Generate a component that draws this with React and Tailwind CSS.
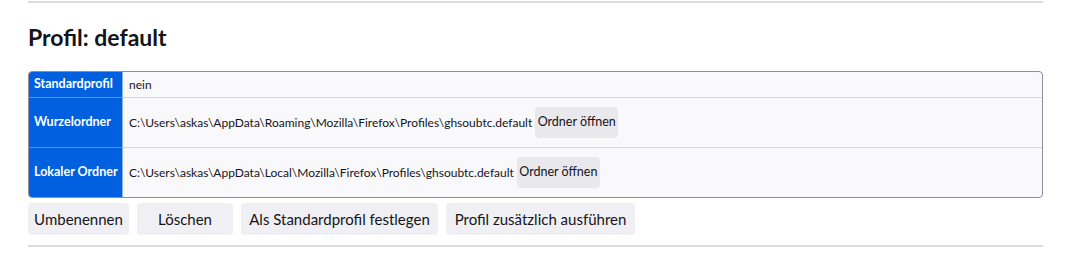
const rows = [
  { label: "Standardprofil", value: "nein" },
  {
    label: "Wurzelordner",
    value: "C:\\Users\\askas\\AppData\\Roaming\\Mozilla\\Firefox\\Profiles\\ghsoubtc.default",
    open: true,
  },
  {
    label: "Lokaler Ordner",
    value: "C:\\Users\\askas\\AppData\\Local\\Mozilla\\Firefox\\Profiles\\ghsoubtc.default",
    open: true,
  },
];

const actions = [
  { text: "Umbenennen", width: "w-[101px]" },
  { text: "Löschen", width: "w-[96px]" },
  { text: "Als Standardprofil festlegen", width: "w-[197px]" },
  { text: "Profil zusätzlich ausführen", width: "w-[189px]" },
];

function App() {
  return (
    <div
      className="w-[1086px] h-[269px] bg-white text-[#15141a] pl-[28px] pt-[1px]"
      style={{ fontFamily: 'Lato, "Noto Sans", sans-serif' }}
    >
      <div className="w-[1015px]">
        <div className="h-[2px] bg-[#dcdce0]" />

        <h2 className="mt-[22px] h-[24px] text-[23px] leading-[24px] font-bold">
          Profil: default
        </h2>

        <div className="mt-[22px] border border-[#8f8f9d] rounded-[4px] overflow-hidden bg-[#f9f9fb]">
          {rows.map((row, i) => (
            <div
              key={row.label}
              className={
                "flex " +
                (i > 0 ? "h-[50px] border-t border-[#d7d7db]" : "h-[25px]")
              }
            >
              <div
                className={
                  "w-[94px] shrink-0 flex items-center px-[5px] bg-[#0060df] text-white text-[12.5px] font-bold whitespace-nowrap border-r border-[#8ab4f0]" +
                  (i > 0 ? " border-t border-t-[#5a8fe6] -mt-px" : "")
                }
              >
                {row.label}
              </div>
              <div className="flex items-center gap-[3px] pl-[6px] text-[12px] whitespace-nowrap">
                <span>{row.value}</span>
                {row.open && (
                  <button className="h-[31px] w-[83px] rounded-[4px] bg-[#e9e9ed] text-[12.5px]">
                    Ordner öffnen
                  </button>
                )}
              </div>
            </div>
          ))}
        </div>

        <div className="flex gap-[8px] mt-[5px]">
          {actions.map((a) => (
            <button
              key={a.text}
              className={
                a.width +
                " h-[32px] rounded-[4px] bg-[#f0f0f4] text-[15px] whitespace-nowrap"
              }
            >
              {a.text}
            </button>
          ))}
        </div>

        <div className="mt-[10px] h-[2px] bg-[#dcdce0]" />
      </div>
    </div>
  );
}

export default App;
